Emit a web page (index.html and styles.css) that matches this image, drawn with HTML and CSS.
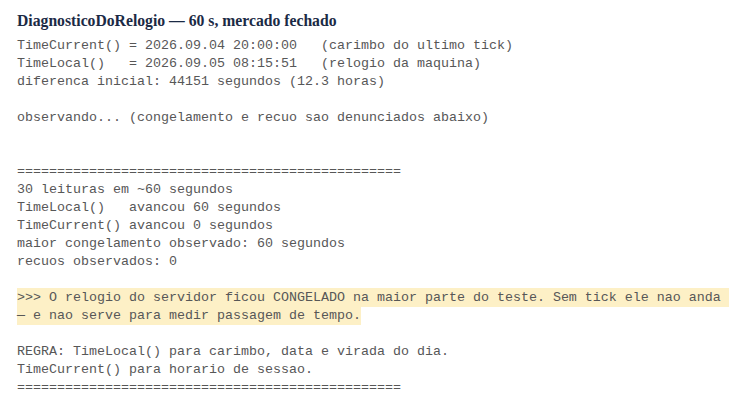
FILE: index.html
```html
<!DOCTYPE html>
<html lang="pt">
<head>
<meta charset="utf-8">
<title>DiagnosticoDoRelogio</title>
<link rel="stylesheet" href="styles.css">
</head>
<body>
<main class="report">
<h1 class="title">DiagnosticoDoRelogio — 60 s, mercado fechado</h1>
<pre class="log">TimeCurrent() = 2026.09.04 20:00:00   (carimbo do ultimo tick)
TimeLocal()   = 2026.09.05 08:15:51   (relogio da maquina)
diferenca inicial: 44151 segundos (12.3 horas)

observando... (congelamento e recuo sao denunciados abaixo)


================================================
30 leituras em ~60 segundos
TimeLocal()   avancou 60 segundos
TimeCurrent() avancou 0 segundos
maior congelamento observado: 60 segundos
recuos observados: 0

<span class="alert">&gt;&gt;&gt; O relogio do servidor ficou CONGELADO na maior parte do teste. Sem tick ele nao anda — e nao serve para medir passagem de tempo.</span>

REGRA: TimeLocal() para carimbo, data e virada do dia.
TimeCurrent() para horario de sessao.
================================================</pre>
</main>
</body>
</html>
```

FILE: styles.css
```css
html, body {
  margin: 0;
  padding: 0;
  background: #ffffff;
}

.report {
  padding: 11px 17px 0 17px;
  width: 716px;
}

.title {
  margin: 0 0 6px 0;
  font-family: "Liberation Serif", "DejaVu Serif", serif;
  font-weight: bold;
  font-size: 15.7px;
  line-height: 20px;
  color: #1b2a45;
}

.log {
  margin: 0;
  font-family: "Liberation Mono", "DejaVu Sans Mono", monospace;
  font-size: 13.333px;
  line-height: 18px;
  color: #575757;
  white-space: pre-wrap;
}

.alert {
  background: #fdf0c6;
  padding: 2px 0;
}
```
